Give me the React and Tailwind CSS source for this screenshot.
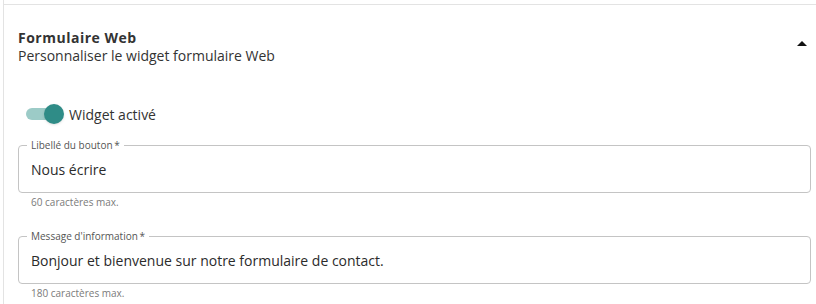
import { useState } from "react";

function OutlinedField({ label, value, helper }) {
  return (
    <div>
      <div className="relative h-[48px] rounded-[4px] border border-[#c4c4c4] flex items-center pl-[12px]">
        <span className="absolute -top-[7px] left-[8px] bg-white px-[4px] text-[10px] leading-[12px] text-[#555]">
          {label}{"\u2009*"}
        </span>
        <span className="text-[14px] text-[#2b2b2b]">{value}</span>
      </div>
      <p className="pl-[13px] pt-[2px] text-[10px] leading-[14px] text-[#7a7a7a]">{helper}</p>
    </div>
  );
}

export default function App() {
  const [enabled, setEnabled] = useState(true);

  return (
    <div
      className="w-[816px] h-[304px] overflow-hidden bg-white pl-[3px]"
      style={{ fontFamily: '"Open Sans", "Noto Sans", sans-serif' }}
    >
      <div className="h-full border-l border-[#e3e3e3] pt-[4px]">
        <div className="border-t border-[#e3e3e3]">
          <div className="flex items-center justify-between pl-[14px] pr-[2px] pt-[24px]">
            <div>
              <h2 className="text-[14px] font-bold leading-[18px] tracking-[0.5px] text-[#333]">Formulaire Web</h2>
              <p className="text-[14px] leading-[18px] text-[#333]">
                Personnaliser le widget formulaire Web
              </p>
            </div>
            <svg width="24" height="24" viewBox="0 0 24 24" className="mt-[-7px]">
              <path d="M7 14l5-5 5 5z" fill="#111" />
            </svg>
          </div>

          <div className="flex items-center gap-[5px] pl-[18px] pt-[38px]">
            <button
              type="button"
              onClick={() => setEnabled(!enabled)}
              className="relative flex h-[22px] w-[42px] items-center"
            >
              <span
                className={
                  enabled
                    ? "ml-[4px] h-[12px] w-[32px] rounded-full bg-[#9ccbc7]"
                    : "ml-[4px] h-[12px] w-[32px] rounded-full bg-[#c8c8c8]"
                }
              />
              <span
                className={
                  enabled
                    ? "absolute left-[22px] h-[20px] w-[20px] rounded-full bg-[#2f8c87] shadow-sm"
                    : "absolute left-[0px] h-[20px] w-[20px] rounded-full bg-[#f5f5f5] shadow-sm"
                }
              />
            </button>
            <span className="text-[14px] text-[#333]">Widget activé</span>
          </div>

          <div className="flex flex-col gap-[27px] pl-[14px] pr-[5px] pt-[20px]">
            <OutlinedField label="Libellé du bouton" value="Nous écrire" helper="60 caractères max." />
            <OutlinedField
              label="Message d'information"
              value="Bonjour et bienvenue sur notre formulaire de contact."
              helper="180 caractères max."
            />
          </div>
        </div>
      </div>
    </div>
  );
}
